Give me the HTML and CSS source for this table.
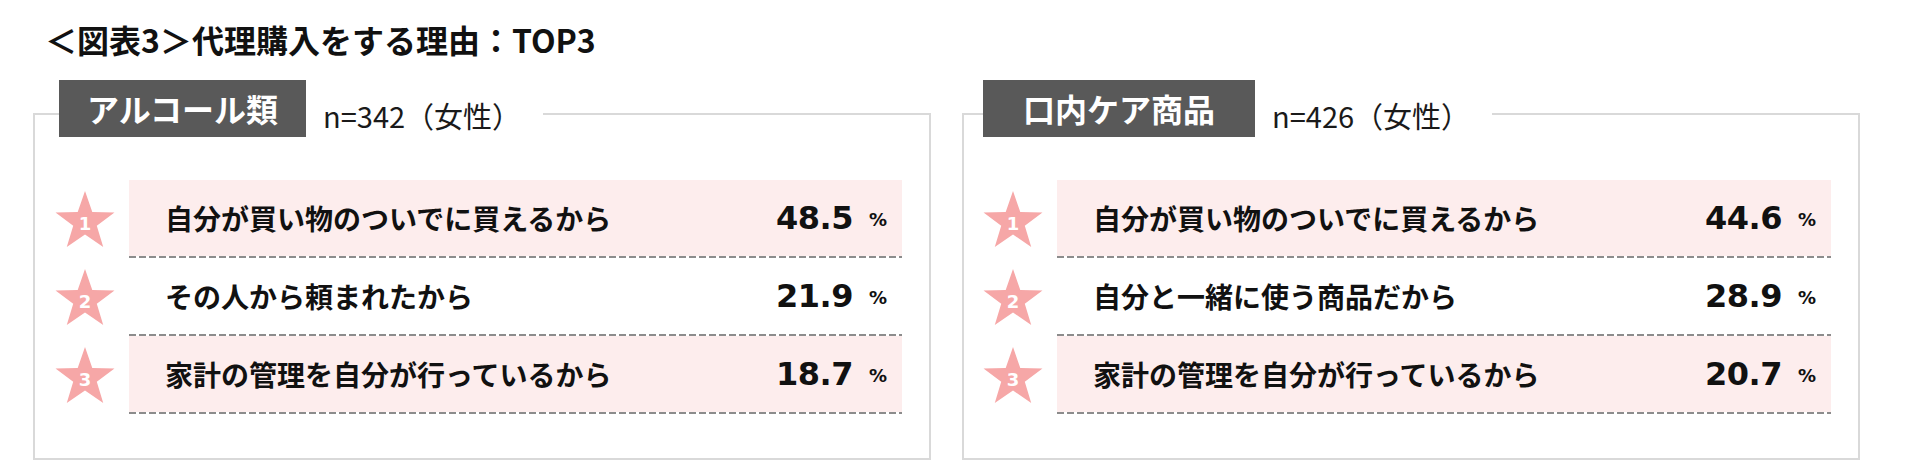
FILE: index.html
```html
<!DOCTYPE html>
<html lang="ja">
<head>
<meta charset="utf-8">
<title>代理購入をする理由</title>
<link rel="stylesheet" href="styles.css">
</head>
<body>
<div class="page">
  <h1 class="title">＜図表3＞代理購入をする理由：TOP3</h1>
  <div class="panels">
    <section class="panel">
      <div class="panel-head">
        <div class="label">アルコール類</div>
        <div class="sample">n=342（女性）</div>
      </div>
      <ol class="ranks">
        <li class="rank">
          <svg class="star" viewBox="0 0 60 57"><polygon points="30,0 37.29,20.97 59.48,21.42 41.79,34.83 48.22,56.08 30,43.4 11.78,56.08 18.21,34.83 0.52,21.42 22.71,20.97"/><text x="30" y="38.5">1</text></svg>
          <div class="bar bar--pink"><span class="reason">自分が買い物のついでに買えるから</span><span class="score"><span class="value">48.5</span><span class="unit">%</span></span></div>
        </li>
        <li class="rank">
          <svg class="star" viewBox="0 0 60 57"><polygon points="30,0 37.29,20.97 59.48,21.42 41.79,34.83 48.22,56.08 30,43.4 11.78,56.08 18.21,34.83 0.52,21.42 22.71,20.97"/><text x="30" y="38.5">2</text></svg>
          <div class="bar"><span class="reason">その人から頼まれたから</span><span class="score"><span class="value">21.9</span><span class="unit">%</span></span></div>
        </li>
        <li class="rank">
          <svg class="star" viewBox="0 0 60 57"><polygon points="30,0 37.29,20.97 59.48,21.42 41.79,34.83 48.22,56.08 30,43.4 11.78,56.08 18.21,34.83 0.52,21.42 22.71,20.97"/><text x="30" y="38.5">3</text></svg>
          <div class="bar bar--pink"><span class="reason">家計の管理を自分が行っているから</span><span class="score"><span class="value">18.7</span><span class="unit">%</span></span></div>
        </li>
      </ol>
    </section>
    <section class="panel panel--b">
      <div class="panel-head">
        <div class="label label--wide">口内ケア商品</div>
        <div class="sample">n=426（女性）</div>
      </div>
      <ol class="ranks">
        <li class="rank">
          <svg class="star" viewBox="0 0 60 57"><polygon points="30,0 37.29,20.97 59.48,21.42 41.79,34.83 48.22,56.08 30,43.4 11.78,56.08 18.21,34.83 0.52,21.42 22.71,20.97"/><text x="30" y="38.5">1</text></svg>
          <div class="bar bar--pink"><span class="reason">自分が買い物のついでに買えるから</span><span class="score"><span class="value">44.6</span><span class="unit">%</span></span></div>
        </li>
        <li class="rank">
          <svg class="star" viewBox="0 0 60 57"><polygon points="30,0 37.29,20.97 59.48,21.42 41.79,34.83 48.22,56.08 30,43.4 11.78,56.08 18.21,34.83 0.52,21.42 22.71,20.97"/><text x="30" y="38.5">2</text></svg>
          <div class="bar"><span class="reason">自分と一緒に使う商品だから</span><span class="score"><span class="value">28.9</span><span class="unit">%</span></span></div>
        </li>
        <li class="rank">
          <svg class="star" viewBox="0 0 60 57"><polygon points="30,0 37.29,20.97 59.48,21.42 41.79,34.83 48.22,56.08 30,43.4 11.78,56.08 18.21,34.83 0.52,21.42 22.71,20.97"/><text x="30" y="38.5">3</text></svg>
          <div class="bar bar--pink"><span class="reason">家計の管理を自分が行っているから</span><span class="score"><span class="value">20.7</span><span class="unit">%</span></span></div>
        </li>
      </ol>
    </section>
  </div>
</div>
</body>
</html>
```

FILE: styles.css
```css
html, body {
  margin: 0;
  padding: 0;
  background: #ffffff;
}

body {
  font-family: "Noto Sans CJK JP", "Noto Sans", sans-serif;
  color: #111111;
}

.page {
  width: 1919px;
  height: 474px;
  overflow: hidden;
}

.title {
  margin: 0;
  padding: 21px 0 0 45px;
  font-size: 32px;
  font-weight: 700;
  line-height: 37px;
  color: #111111;
}

.panels {
  display: grid;
  grid-template-columns: 898px 898px;
  column-gap: 31px;
  margin-top: 55px;
  padding-left: 33px;
}

.panel {
  border: 2px solid #d9d9d9;
}

.panel-head {
  display: flex;
  align-items: center;
  width: fit-content;
  margin: -35px 0 0 24px;
  padding-right: 22px;
  background: #ffffff;
}

.panel--b .panel-head {
  margin-left: 19px;
}

.label {
  height: 57px;
  padding: 0 28px;
  background: #595959;
  color: #ffffff;
  font-size: 32px;
  font-weight: 700;
  line-height: 57px;
}

.label--wide {
  padding: 0 40px;
}

.sample {
  margin-left: 17px;
  padding-top: 13px;
  font-size: 29px;
  line-height: 38px;
  color: #1a1a1a;
}

.ranks {
  list-style: none;
  margin: 43px 0 44px;
  padding: 0 27px 0 20px;
}

.panel--b .ranks {
  padding-left: 19px;
}

.rank {
  display: flex;
  align-items: center;
  gap: 14px;
}

.star {
  flex: none;
  width: 60px;
  height: 57px;
}

.star polygon {
  fill: #f6a7a7;
}

.star text {
  fill: #ffffff;
  font-family: "DejaVu Sans", sans-serif;
  font-weight: 700;
  font-size: 18px;
  text-anchor: middle;
}

.bar {
  flex: 1;
  display: flex;
  align-items: center;
  box-sizing: border-box;
  height: 78px;
  padding: 0 15px 2px 36px;
  background:
    repeating-linear-gradient(90deg, #8c8c8c 0 7px, transparent 7px 10px) left bottom / 100% 2px no-repeat;
}

.bar--pink {
  background:
    repeating-linear-gradient(90deg, #8c8c8c 0 7px, transparent 7px 10px) left bottom / 100% 2px no-repeat,
    linear-gradient(#fdeded, #fdeded) left top / 100% 76px no-repeat;
}

.reason {
  flex: 1;
  font-size: 28px;
  font-weight: 700;
  color: #111111;
}

.score {
  white-space: nowrap;
  font-family: "DejaVu Sans", sans-serif;
  font-weight: 700;
  color: #111111;
}

.value {
  font-size: 32px;
  letter-spacing: -0.5px;
}

.unit {
  margin-left: 16px;
  font-size: 18px;
  vertical-align: 3px;
}
```
